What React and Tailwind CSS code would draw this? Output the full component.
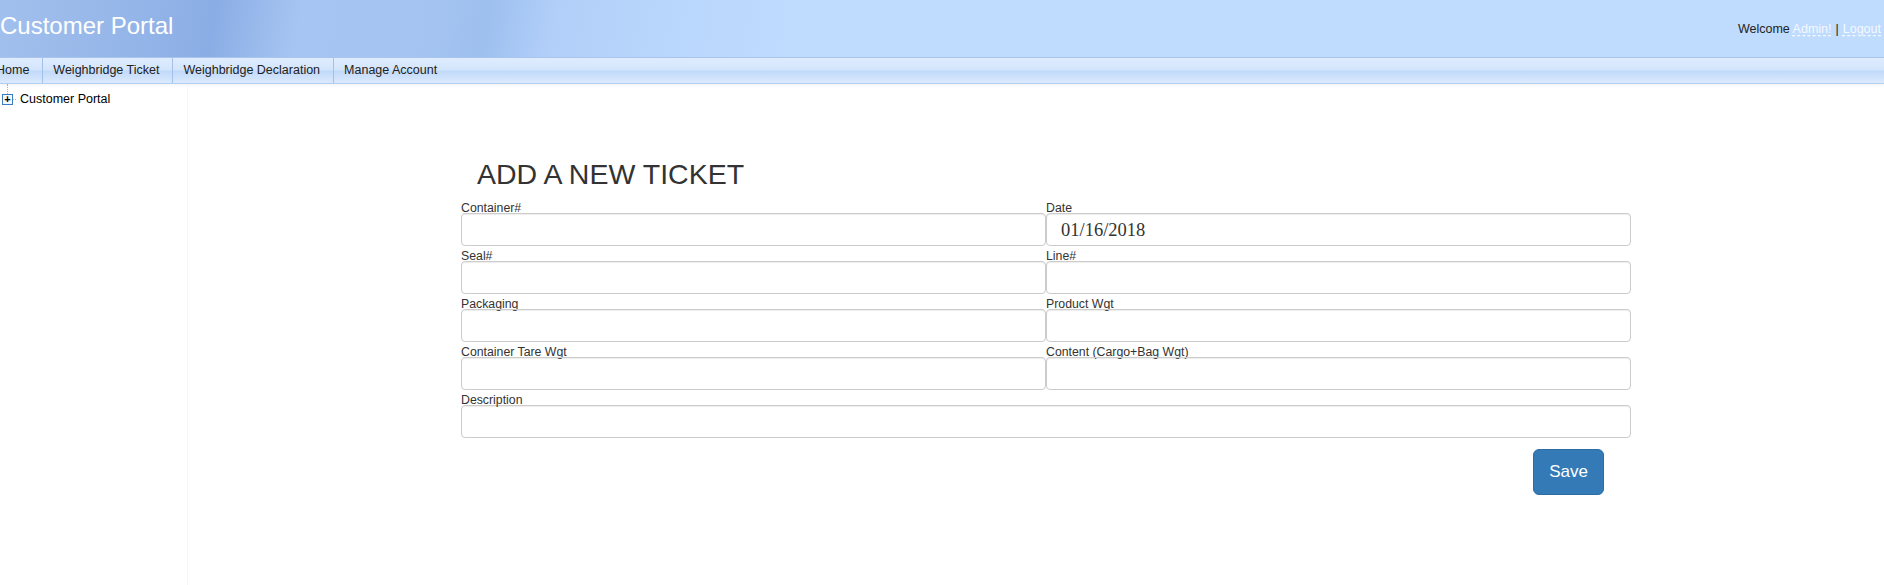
export default function App() {
  const fields = [
    ["Container#", ""],
    ["Date", "01/16/2018"],
    ["Seal#", ""],
    ["Line#", ""],
    ["Packaging", ""],
    ["Product Wgt", ""],
    ["Container Tare Wgt", ""],
    ["Content (Cargo+Bag Wgt)", ""],
  ];

  return (
    <div className="min-h-[585px] flex flex-col bg-white font-['Liberation_Sans',Arial,sans-serif] text-[#222]">
      {/* Header */}
      <div className="h-[57px] flex items-center justify-between bg-[linear-gradient(100deg,#a2c0ed_0%,#93b4e8_8%,#8aade5_11.5%,#a7c5f2_16%,#a6c4f1_22%,#9ec0ef_26%,#b2cff9_29.5%,#b9d6fc_36%,#bfdbfe_42%)]">
        <div className="text-white text-[24px] leading-none -mt-[6px]">Customer Portal</div>
        <div className="text-[12.5px] pr-[3px] mt-[1px]">
          Welcome{" "}
          <a className="text-[#f4f9ff] underline decoration-dashed underline-offset-2">Admin!</a>
          <span className="mx-[4px]">|</span>
          <a className="text-[#f4f9ff] underline decoration-dashed underline-offset-2">Logout</a>
        </div>
      </div>

      {/* Menu */}
      <div className="h-[27px] flex border-y border-t-[#a9c5ee] border-b-[#b2cff3] bg-[linear-gradient(to_bottom,#dfecfe_0%,#d3e5fc_48%,#c1d9fa_52%,#dbeafd_100%)] shadow-[0_2px_3px_rgba(0,0,0,0.04)] overflow-hidden">
        {["Home", "Weighbridge Ticket", "Weighbridge Declaration", "Manage Account"].map((item, i) => (
          <div
            key={item}
            className={
              "flex items-center text-[12.5px] text-[#222] pl-[10px] pr-[13px] " +
              (i === 0 ? "-ml-[14px] " : "") +
              (i < 3 ? "border-r border-[#a3c0ea]" : "")
            }
          >
            {item}
          </div>
        ))}
      </div>

      {/* Body */}
      <div className="flex flex-1">
        <div className="w-[188px] border-r border-[#f6f6f6]">
          <div className="flex items-center h-[30px] relative">
            <div className="absolute left-[7px] top-0 h-[10px] border-l border-dotted border-[#9fb4cf]" />
            <div className="ml-[2px] w-[11px] h-[11px] border border-[#3d7cc0] bg-[#f3f8ff] flex items-center justify-center text-[11px] leading-none text-black font-bold">
              +
            </div>
            <div className="w-[3px] border-t border-dotted border-[#9fb4cf]" />
            <div className="ml-[4px] text-[12.5px] text-black">Customer Portal</div>
          </div>
        </div>

        <div className="pl-[273px] pt-[66px]">
          <div className="w-[1170px]">
            <div className="h-[48px] flex items-center pl-[16px] text-[28.5px] text-[#333]">ADD A NEW TICKET</div>
            <div className="grid grid-cols-2">
              {fields.map(([label, value]) => (
                <div key={label} className="flex flex-col">
                  <div className="h-[15px] pt-[4px] text-[12.3px] leading-[12px] text-[#333] whitespace-nowrap">{label}</div>
                  <div className="h-[33px] border border-[#cccccc] rounded-[4px] shadow-[inset_0_1px_1px_rgba(0,0,0,0.075)] flex items-center pl-[14px] pt-[2px] font-['Liberation_Serif',serif] text-[18.5px] text-[#333]">
                    {value}
                  </div>
                </div>
              ))}
            </div>
            <div className="h-[15px] pt-[4px] text-[12.3px] leading-[12px] text-[#333]">Description</div>
            <div className="h-[33px] border border-[#cccccc] rounded-[4px] shadow-[inset_0_1px_1px_rgba(0,0,0,0.075)]" />
            <div className="flex justify-end pr-[27px] mt-[11px]">
              <button className="w-[71px] h-[46px] rounded-[6px] bg-[#337ab7] border border-[#2e6da4] text-white text-[17px]">
                Save
              </button>
            </div>
          </div>
        </div>
      </div>
    </div>
  );
}
